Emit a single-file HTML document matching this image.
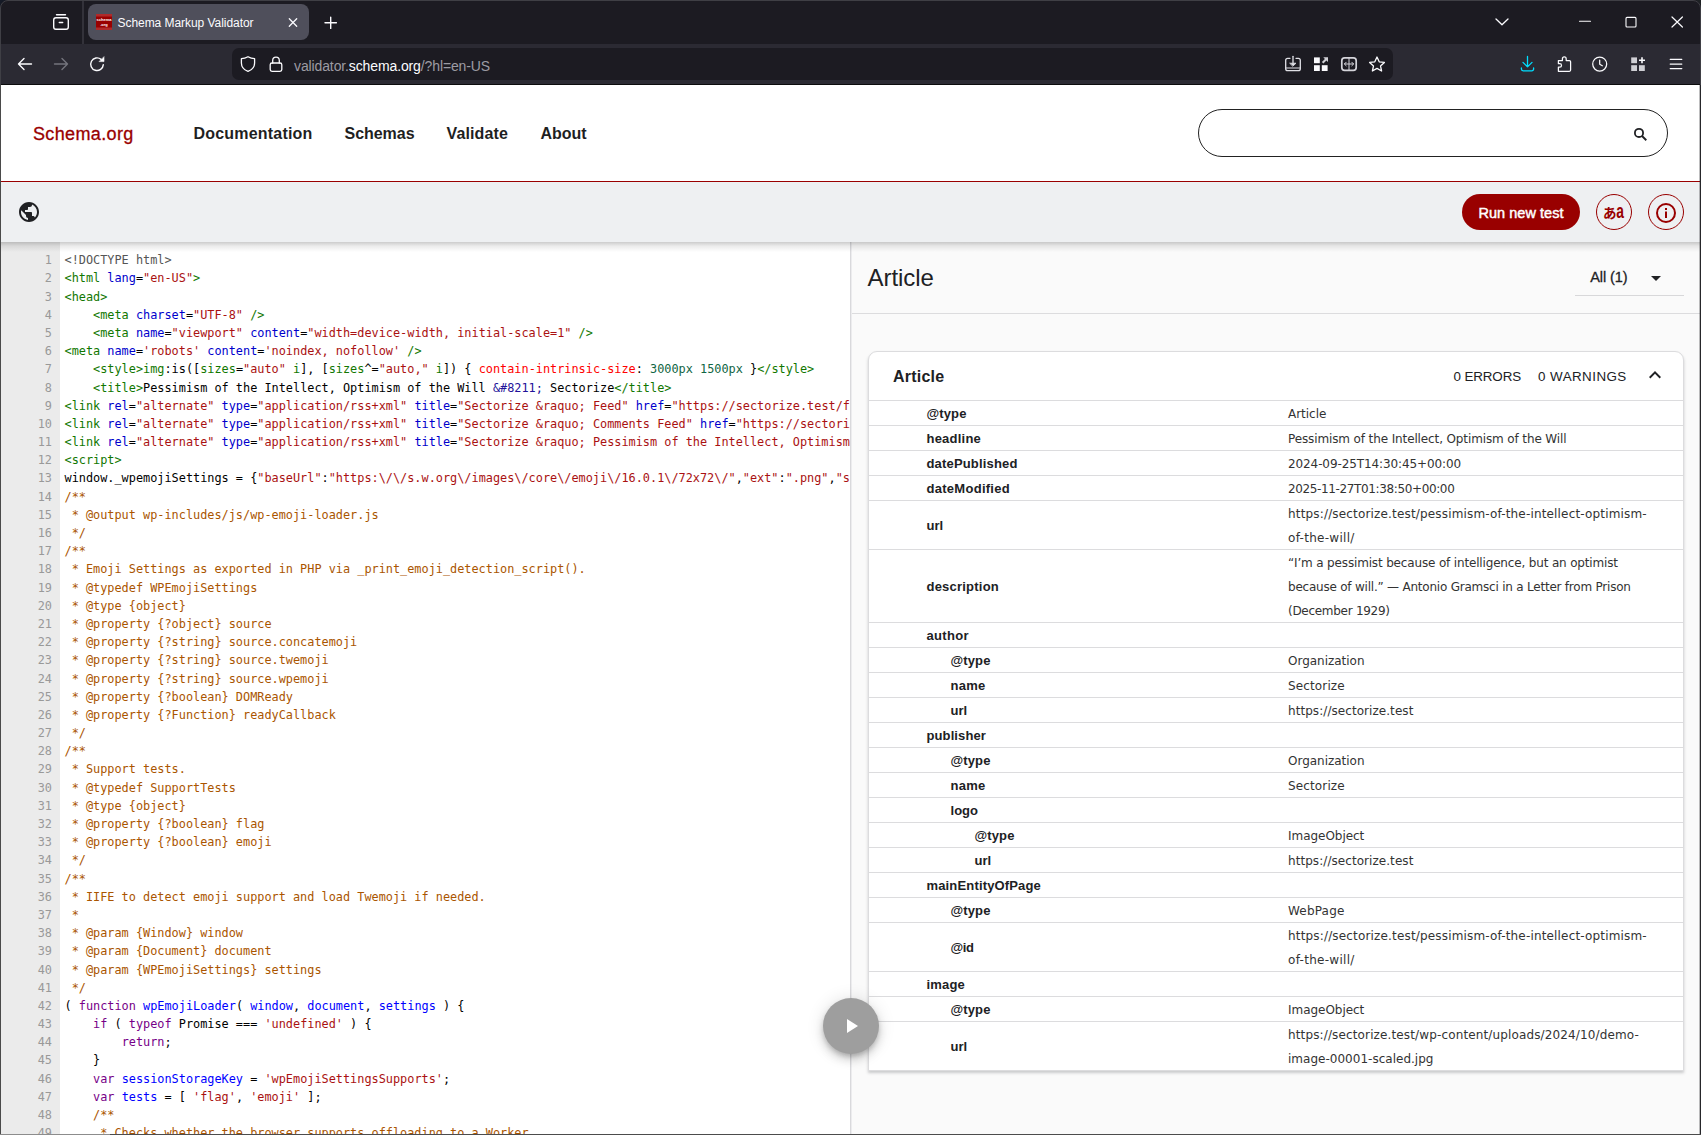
<!DOCTYPE html>
<html lang="en"><head><meta charset="utf-8"><title>Schema Markup Validator</title>
<style>
*{box-sizing:border-box;margin:0;padding:0}
html,body{width:1701px;height:1135px;overflow:hidden;background:#fff;font-family:"Liberation Sans",sans-serif;}
#win{position:absolute;left:0;top:0;width:1701px;height:1135px;overflow:hidden;background:#fff}
.abs{position:absolute}
/* browser chrome */
#tabbar{position:absolute;left:0;top:0;width:1701px;height:44px;background:#1c1b22}
#navbar{position:absolute;left:0;top:44px;width:1701px;height:41px;background:#2b2a33;border-bottom:1px solid #0c0c0d}
#tab{position:absolute;left:88px;top:4px;width:221px;height:36px;border-radius:8px;background:#4f4f5b}
#tabtitle{position:absolute;left:117.5px;top:15px;letter-spacing:-0.05px;font-size:12px;color:#fbfbfe;white-space:nowrap;line-height:16px}
#urlbar{position:absolute;left:232px;top:48px;width:1161px;height:32px;border-radius:7px;background:#1c1b22}
#url{position:absolute;left:294px;top:56.5px;letter-spacing:-0.12px;font-size:14px;color:#9c9ca3;white-space:nowrap;line-height:18px}
#url b{font-weight:normal;color:#fbfbfe}
/* site header */
#hdr{position:absolute;left:0;top:85px;width:1701px;height:97px;background:#fff;border-bottom:1.2px solid #990000}
#logo{position:absolute;left:33px;top:124px;font-size:18px;letter-spacing:.36px;color:#990000;line-height:20px;white-space:nowrap;-webkit-text-stroke:0.3px #990000}
.nav{position:absolute;top:124px;font-size:16px;font-weight:bold;color:#1f1f1f;line-height:20px;white-space:nowrap}
#search{position:absolute;left:1198px;top:108.6px;width:470px;height:48.6px;border:1.2px solid #222;border-radius:24.3px;background:#fff}
/* toolbar */
#tb{position:absolute;left:0;top:182px;width:1701px;height:60px;background:#eef0f2}
#tbshadow{position:absolute;left:0;top:242px;width:1701px;height:10px;background:linear-gradient(rgba(0,0,0,.2),rgba(0,0,0,.08) 40%,rgba(0,0,0,0))}
#run{position:absolute;left:1462px;top:194px;width:118px;height:36px;border-radius:18px;background:#990000;color:#fff;font-size:14.5px;letter-spacing:.03px;-webkit-text-stroke:.45px #fff;text-align:center;line-height:38px;white-space:nowrap}
.circ{position:absolute;top:194px;width:36px;height:36px;border-radius:18px;border:1px solid #990000;background:#eef0f2}
/* code */
#code{position:absolute;left:0;top:242px;width:851px;height:893px;background:#fff;overflow:hidden}
#gutter{position:absolute;left:0;top:0;width:60px;height:893px;background:#ebebeb}
#lines{position:absolute;left:0;top:9.2px;width:2000px;font-family:"DejaVu Sans Mono","Liberation Mono",monospace;font-size:11.87px;line-height:18.19px;color:#000}
#lines div{height:18.19px;position:relative;padding-left:64.5px;white-space:pre}
#lines i{position:absolute;left:0;width:52px;text-align:right;color:#999;font-style:normal}
.t{color:#117700}.a{color:#0000cc}.s{color:#aa1111}.c{color:#aa5500}.k{color:#770088}.d{color:#0000ff}.m{color:#555}.e{color:#ff0000}.n{color:#116644}.at{color:#221199}.v2{color:#0055aa}
/* right */
#right{position:absolute;left:852px;top:242px;width:849px;height:893px;background:#fafafa}
#divider{position:absolute;left:850px;top:242px;width:2px;height:893px;background:linear-gradient(90deg,#d9d9dc 50%,#ececee 50%)}
#rtitle{position:absolute;left:15.5px;top:21.5px;letter-spacing:-.05px;font-size:24px;line-height:28px;color:#202124;white-space:nowrap}
#rsel{position:absolute;left:738.3px;top:26px;font-size:14.5px;letter-spacing:-.1px;line-height:18px;color:#202124;white-space:nowrap;-webkit-text-stroke:.3px #202124}
#rselarrow{position:absolute;left:799px;top:34px;width:0;height:0;border-left:5px solid transparent;border-right:5px solid transparent;border-top:5px solid #202124}
#rselline{position:absolute;left:722.5px;top:53px;width:109px;height:1px;background:#d8d8da}
#rhr{position:absolute;left:0;top:71px;width:849px;height:1px;background:#dcdcde}
#card{position:absolute;left:16px;top:109px;width:816px;height:720px;background:#fff;border:1px solid #dcdcde;border-radius:9px 9px 0 0;box-shadow:0 2px 3px rgba(60,64,67,.25)}
#ctitle{position:absolute;left:24px;top:14.5px;letter-spacing:.23px;font-size:16px;font-weight:bold;line-height:20px;color:#202124;white-space:nowrap}
#cerr,#cwarn{position:absolute;top:15.5px;font-size:13.4px;line-height:18px;color:#202124;white-space:nowrap}
#cerr{left:584.5px;letter-spacing:-.12px}#cwarn{left:669px;letter-spacing:.44px}
#chev{position:absolute;left:774px;top:11px}
.row{position:absolute;left:0;width:814px;border-top:1px solid #dcdcde}
.row .k{position:absolute;top:1px;font-size:13px;font-weight:bold;color:#202124;white-space:nowrap}
.row .v{position:absolute;left:419px;font-family:"DejaVu Sans","Liberation Sans",sans-serif;font-size:12px;line-height:24px;color:#333;white-space:nowrap}
</style></head><body><div id="win">
<div id="tabbar"></div><div id="navbar"></div>
<div id="tab"></div><div id="tabtitle">Schema Markup Validator</div>
<div id="urlbar"></div><div id="url">validator.<b>schema.org</b>/?hl=en-US</div>
<svg id="chrome" class="abs" style="left:0;top:0" width="1701" height="85" viewBox="0 0 1701 85" fill="none" stroke="#fbfbfe" stroke-width="1.4" stroke-linecap="round" stroke-linejoin="round">
<rect x="82.5" y="1" width="1" height="43" fill="#4b4a53" stroke="none"/>
<!-- firefox view -->
<path d="M56.5 14.8h9" /><rect x="53.7" y="17.7" width="14.6" height="11.6" rx="2.2"/><path d="M59.3 22.5h3.4"/>
<!-- favicon -->
<rect x="96" y="14" width="16" height="16" fill="#990000" stroke="none"/>
<rect x="96" y="14" width="16" height="2.5" fill="#b02a2a" stroke="none"/><rect x="96" y="27.5" width="16" height="2.5" fill="#b02a2a" stroke="none"/>
<text x="104" y="21.4" font-family="Liberation Sans,sans-serif" font-size="4" font-weight="bold" fill="#fff" stroke="none" text-anchor="middle">schema</text>
<text x="104" y="25.6" font-family="Liberation Sans,sans-serif" font-size="4" font-weight="bold" fill="#fff" stroke="none" text-anchor="middle">.org</text>
<!-- tab close -->
<path d="M289.3 18.8l7.4 7.4M296.7 18.8l-7.4 7.4" stroke-width="1.3"/>
<!-- new tab -->
<path d="M325 22.7h11.4M330.7 17.2v11.2" stroke-width="1.4"/>
<!-- list all tabs chevron -->
<path d="M1496 19l6 5.8 6-5.8" stroke-width="1.3"/>
<!-- window controls -->
<path d="M1579.5 21.3h11" stroke-width="1.1"/>
<rect x="1626" y="17.4" width="10" height="9.6" rx="1" stroke-width="1.1"/>
<path d="M1672 17l10.4 10M1682.4 17l-10.4 10" stroke-width="1.2"/>
<!-- back -->
<path d="M31.5 64h-13M24 58.5l-5.5 5.5 5.5 5.5"/>
<!-- forward -->
<path d="M54.5 64h13M62 58.5l5.500 5.5-5.500 5.500" stroke="#74747d"/>
<!-- reload -->
<path d="M103.300 64.600a6.300 6.300 0 1 1-2.200-5.200"/><path d="M104 57v4.600h-4.600z" fill="#fbfbfe" stroke-width="0.6"/>
<!-- shield -->
<path d="M248 56.700c2.400 1.400 4.400 1.900 6.600 2v4.300c0 4-2.700 6.900-6.600 8.400-3.900-1.500-6.600-4.400-6.600-8.400v-4.300c2.200-.1 4.200-.6 6.600-2z" stroke-width="1.3"/>
<!-- lock -->
<rect x="270.200" y="63" width="11.600" height="8.400" rx="1.800" stroke-width="1.300"/><path d="M272.700 63v-2.600a3.300 3.300 0 0 1 6.600 0v2.600" stroke-width="1.300"/>
<!-- install -->
<g stroke="#e0e0e6" stroke-width="1.3"><path d="M1290 58.300h-2.300a2 2 0 0 0-2 2v8.400a2 2 0 0 0 2 2h10.600a2 2 0 0 0 2-2v-8.400a2 2 0 0 0-2-2h-2.300"/><path d="M1285.700 68h14.600" stroke-width="1"/><path d="M1293 56.300v7"/><path d="M1290 63.200h6l-3 2.800z" fill="#e0e0e6" stroke-width="0.800"/></g>
<!-- grid arrow -->
<g fill="#fbfbfe" stroke="none"><rect x="1314" y="57.400" width="5.800" height="5.800"/><rect x="1314" y="65.200" width="5.800" height="5.800"/><rect x="1321.800" y="65.200" width="5.800" height="5.800"/><path d="M1323.300 57.300h4.700v4.700l-1.600-1.600-3 3-1.500-1.500 3-3z" fill="#d0d0d6"/></g>
<!-- split -->
<g stroke="#d4d4da" stroke-width="1.300"><rect x="1341.800" y="57.900" width="14.400" height="12.400" rx="2.800" stroke-width="1.700"/><path d="M1349 58v12.400" stroke-width="1"/><path d="M1344.500 64h9M1346.200 62.200l-1.800 1.800 1.800 1.800M1351.800 62.200l1.800 1.800-1.800 1.800" stroke-width="1"/></g>
<!-- star -->
<path d="M1377 57l2.200 4.800 5.200.6-3.900 3.500 1.100 5.100-4.600-2.600-4.600 2.600 1.100-5.100-3.900-3.500 5.200-.6z" stroke-width="1.300"/>
<!-- downloads -->
<g stroke="#00ddff" stroke-width="1.300"><path d="M1527.500 56.400v10.400M1523 62.400l4.500 4.500 4.500-4.500M1521.400 68v1a1.800 1.800 0 0 0 1.800 1.800h8.600a1.800 1.800 0 0 0 1.800-1.800v-1"/></g>
<!-- puzzle -->
<path d="M1558.400 71.300v-4.200h1.400a1.700 1.700 0 0 0 0-3.400h-1.400v-3.100h4v-1.700a1.900 1.900 0 0 1 3.800 0v1.700h3.200a1.200 1.200 0 0 1 1.200 1.200v8.300a1.200 1.200 0 0 1-1.200 1.200z" stroke-width="1.250"/>
<!-- clock -->
<circle cx="1599.700" cy="64.100" r="7" stroke-width="1.250"/><path d="M1599.700 60v4.300l2.600 1.500" stroke-width="1.250"/>
<!-- grid plus -->
<g fill="#cfcfd4" stroke="none"><rect x="1631.200" y="57.400" width="5.800" height="5.800"/><rect x="1631.200" y="65.200" width="5.800" height="5.800"/><rect x="1639" y="65.200" width="5.800" height="5.800"/><path d="M1641.200 57.200h1.600v2.200h2.200v1.600h-2.200v2.200h-1.600v-2.200h-2.200v-1.600h2.200z" fill="#fbfbfe"/></g>
<!-- hamburger -->
<path d="M1670.200 59.300h11.600M1670.200 64h11.600M1670.200 68.600h11.600" stroke-width="1.250"/>
</svg>
<div id="hdr"></div>
<div id="logo">Schema.org</div>
<div class="nav" style="left:193.5px;letter-spacing:.2px">Documentation</div>
<div class="nav" style="left:344.5px;letter-spacing:-.04px">Schemas</div>
<div class="nav" style="left:446.5px;letter-spacing:.12px">Validate</div>
<div class="nav" style="left:540.5px;letter-spacing:-.04px">About</div>
<div id="search"></div>
<div id="tb"></div>
<div id="run">Run new test</div>
<div class="circ" style="left:1596px"></div>
<div class="circ" style="left:1648px"></div>
<svg class="abs" style="left:1627px;top:121px" width="24" height="24" viewBox="0 0 24 24"><circle cx="12" cy="11.900" r="4.100" fill="none" stroke="#202124" stroke-width="1.800"/><path d="M15 15l4.300 4.200" stroke="#202124" stroke-width="1.900" fill="none"/></svg>
<svg class="abs" style="left:17px;top:200px" width="24" height="24" viewBox="0 0 24 24"><path fill="#202124" d="M12 2C6.480 2 2 6.480 2 12s4.480 10 10 10 10-4.480 10-10S17.520 2 12 2zm-1 17.930c-3.950-.490-7-3.850-7-7.930 0-.620.080-1.210.210-1.790L9 15v1c0 1.100.900 2 2 2v1.930zm6.900-2.540c-.260-.810-1-1.390-1.900-1.390h-1v-3c0-.550-.450-1-1-1H8v-2h2c.550 0 1-.450 1-1V7h2c1.100 0 2-.900 2-2v-.410c2.930 1.190 5 4.060 5 7.410 0 2.080-.800 3.970-2.100 5.390z"/></svg>
<svg class="abs" style="left:1596px;top:194px" width="36" height="36" viewBox="0 0 36 36"><text x="7" y="24.300" font-family="Liberation Sans,Noto Sans CJK JP,sans-serif" font-size="13.500" font-weight="bold" fill="#990000">あ</text><text transform="translate(20.300 24.100) scale(.66 1)" font-family="Liberation Sans,sans-serif" font-size="21" font-weight="bold" fill="#990000">a</text></svg>
<svg class="abs" style="left:1654px;top:201px" width="24" height="24" viewBox="0 0 24 24"><circle cx="12" cy="12" r="9" fill="none" stroke="#990000" stroke-width="2"/><path d="M11 10.600h2V17h-2zM11 7h2v2h-2z" fill="#990000"/></svg>
<div id="code"><div id="gutter"></div><div id="lines"><div><i>1</i><span class="m">&lt;!DOCTYPE html&gt;</span></div>
<div><i>2</i><span class="t">&lt;html</span> <span class="a">lang</span>=<span class="s">"en-US"</span><span class="t">&gt;</span></div>
<div><i>3</i><span class="t">&lt;head</span><span class="t">&gt;</span></div>
<div><i>4</i>    <span class="t">&lt;meta</span> <span class="a">charset</span>=<span class="s">"UTF-8"</span> <span class="t">/&gt;</span></div>
<div><i>5</i>    <span class="t">&lt;meta</span> <span class="a">name</span>=<span class="s">"viewport"</span> <span class="a">content</span>=<span class="s">"width=device-width, initial-scale=1"</span> <span class="t">/&gt;</span></div>
<div><i>6</i><span class="t">&lt;meta</span> <span class="a">name</span>=<span class="s">'robots'</span> <span class="a">content</span>=<span class="s">'noindex, nofollow'</span> <span class="t">/&gt;</span></div>
<div><i>7</i>    <span class="t">&lt;style&gt;</span><span class="t">img</span>:is([<span class="t">sizes</span>=<span class="s">"auto"</span> <span class="t">i</span>], [<span class="t">sizes</span>^=<span class="s">"auto,"</span> <span class="t">i</span>]) { <span class="e">contain-intrinsic-size</span>: <span class="n">3000px</span> <span class="n">1500px</span> }<span class="t">&lt;/style&gt;</span></div>
<div><i>8</i>    <span class="t">&lt;title&gt;</span>Pessimism of the Intellect, Optimism of the Will <span class="at">&amp;#8211;</span> Sectorize<span class="t">&lt;/title&gt;</span></div>
<div><i>9</i><span class="t">&lt;link</span> <span class="a">rel</span>=<span class="s">"alternate"</span> <span class="a">type</span>=<span class="s">"application/rss+xml"</span> <span class="a">title</span>=<span class="s">"Sectorize &amp;raquo; Feed"</span> <span class="a">href</span>=<span class="s">"https://sectorize.test/feed/"</span> <span class="t">/&gt;</span></div>
<div><i>10</i><span class="t">&lt;link</span> <span class="a">rel</span>=<span class="s">"alternate"</span> <span class="a">type</span>=<span class="s">"application/rss+xml"</span> <span class="a">title</span>=<span class="s">"Sectorize &amp;raquo; Comments Feed"</span> <span class="a">href</span>=<span class="s">"https://sectorize.test/comments/feed/"</span> <span class="t">/&gt;</span></div>
<div><i>11</i><span class="t">&lt;link</span> <span class="a">rel</span>=<span class="s">"alternate"</span> <span class="a">type</span>=<span class="s">"application/rss+xml"</span> <span class="a">title</span>=<span class="s">"Sectorize &amp;raquo; Pessimism of the Intellect, Optimism of the Will Comments Feed"</span> <span class="a">href</span>=<span class="s">"https://sectorize.test/"</span> <span class="t">/&gt;</span></div>
<div><i>12</i><span class="t">&lt;script</span><span class="t">&gt;</span></div>
<div><i>13</i>window._wpemojiSettings = {<span class="s">"baseUrl"</span>:<span class="s">"https:\/\/s.w.org\/images\/core\/emoji\/16.0.1\/72x72\/"</span>,<span class="s">"ext"</span>:<span class="s">".png"</span>,<span class="s">"svgUrl"</span>:<span class="s">"https:\/\/s.w.org\/images\/core\/emoji\/16.0.1\/svg\/"</span>,<span class="s">"svgExt"</span></div>
<div><i>14</i><span class="c">/**</span></div>
<div><i>15</i><span class="c"> * @output wp-includes/js/wp-emoji-loader.js</span></div>
<div><i>16</i><span class="c"> */</span></div>
<div><i>17</i><span class="c">/**</span></div>
<div><i>18</i><span class="c"> * Emoji Settings as exported in PHP via _print_emoji_detection_script().</span></div>
<div><i>19</i><span class="c"> * @typedef WPEmojiSettings</span></div>
<div><i>20</i><span class="c"> * @type {object}</span></div>
<div><i>21</i><span class="c"> * @property {?object} source</span></div>
<div><i>22</i><span class="c"> * @property {?string} source.concatemoji</span></div>
<div><i>23</i><span class="c"> * @property {?string} source.twemoji</span></div>
<div><i>24</i><span class="c"> * @property {?string} source.wpemoji</span></div>
<div><i>25</i><span class="c"> * @property {?boolean} DOMReady</span></div>
<div><i>26</i><span class="c"> * @property {?Function} readyCallback</span></div>
<div><i>27</i><span class="c"> */</span></div>
<div><i>28</i><span class="c">/**</span></div>
<div><i>29</i><span class="c"> * Support tests.</span></div>
<div><i>30</i><span class="c"> * @typedef SupportTests</span></div>
<div><i>31</i><span class="c"> * @type {object}</span></div>
<div><i>32</i><span class="c"> * @property {?boolean} flag</span></div>
<div><i>33</i><span class="c"> * @property {?boolean} emoji</span></div>
<div><i>34</i><span class="c"> */</span></div>
<div><i>35</i><span class="c">/**</span></div>
<div><i>36</i><span class="c"> * IIFE to detect emoji support and load Twemoji if needed.</span></div>
<div><i>37</i><span class="c"> *</span></div>
<div><i>38</i><span class="c"> * @param {Window} window</span></div>
<div><i>39</i><span class="c"> * @param {Document} document</span></div>
<div><i>40</i><span class="c"> * @param {WPEmojiSettings} settings</span></div>
<div><i>41</i><span class="c"> */</span></div>
<div><i>42</i>( <span class="k">function</span> <span class="d">wpEmojiLoader</span>( <span class="d">window</span>, <span class="d">document</span>, <span class="d">settings</span> ) {</div>
<div><i>43</i>    <span class="k">if</span> ( <span class="k">typeof</span> Promise === <span class="s">'undefined'</span> ) {</div>
<div><i>44</i>        <span class="k">return</span>;</div>
<div><i>45</i>    }</div>
<div><i>46</i>    <span class="k">var</span> <span class="d">sessionStorageKey</span> = <span class="s">'wpEmojiSettingsSupports'</span>;</div>
<div><i>47</i>    <span class="k">var</span> <span class="d">tests</span> = [ <span class="s">'flag'</span>, <span class="s">'emoji'</span> ];</div>
<div><i>48</i>    <span class="c">/**</span></div>
<div><i>49</i>    <span class="c"> * Checks whether the browser supports offloading to a Worker.</span></div>
<div><i>50</i>    <span class="c"> *</span></div></div></div>
<div id="divider"></div>
<div id="right"><!--R0-->
<div id="rtitle">Article</div>
<div id="rsel">All (1)</div><div id="rselarrow"></div><div id="rselline"></div>
<div id="rhr"></div>
<div id="card">
<div id="ctitle">Article</div><div id="cerr">0 ERRORS</div><div id="cwarn">0 WARNINGS</div>
<svg id="chev" width="24" height="24" viewBox="0 0 24 24"><path d="M12 8l-6 6 1.410 1.410L12 10.830l4.590 4.580L18 14z" fill="#202124"/></svg>
<div class="row" style="top:48px;height:25px"><div class="k" style="left:57.5px;line-height:24px;letter-spacing:0.119px">@type</div><div class="v" style="top:1px;letter-spacing:-0.029px">Article</div></div>
<div class="row" style="top:73px;height:25px"><div class="k" style="left:57.5px;line-height:24px;letter-spacing:0.219px">headline</div><div class="v" style="top:1px;letter-spacing:-0.121px">Pessimism of the Intellect, Optimism of the Will</div></div>
<div class="row" style="top:98px;height:25px"><div class="k" style="left:57.5px;line-height:24px;letter-spacing:0.165px">datePublished</div><div class="v" style="top:1px;letter-spacing:-0.1px">2024-09-25T14:30:45+00:00</div></div>
<div class="row" style="top:123px;height:25px"><div class="k" style="left:57.5px;line-height:24px;letter-spacing:0.277px">dateModified</div><div class="v" style="top:1px;letter-spacing:-0.368px">2025-11-27T01:38:50+00:00</div></div>
<div class="row" style="top:148px;height:49px"><div class="k" style="left:57.5px;line-height:48px;letter-spacing:-0.042px">url</div><div class="v" style="top:1px;letter-spacing:0.166px">https://sectorize.test/pessimism-of-the-intellect-optimism-</div><div class="v" style="top:25px;letter-spacing:0.298px">of-the-will/</div></div>
<div class="row" style="top:197px;height:73px"><div class="k" style="left:57.5px;line-height:72px;letter-spacing:0.22px">description</div><div class="v" style="top:1px;letter-spacing:-0.16px">“I’m a pessimist because of intelligence, but an optimist</div><div class="v" style="top:25px;letter-spacing:-0.22px">because of will.” — Antonio Gramsci in a Letter from Prison</div><div class="v" style="top:49px;letter-spacing:-0.284px">(December 1929)</div></div>
<div class="row" style="top:270px;height:25px"><div class="k" style="left:57.5px;line-height:24px;letter-spacing:0.341px">author</div></div>
<div class="row" style="top:295px;height:25px"><div class="k" style="left:81.5px;line-height:24px;letter-spacing:0.119px">@type</div><div class="v" style="top:1px;letter-spacing:-0.018px">Organization</div></div>
<div class="row" style="top:320px;height:25px"><div class="k" style="left:81.5px;line-height:24px;letter-spacing:0.258px">name</div><div class="v" style="top:1px;letter-spacing:0.134px">Sectorize</div></div>
<div class="row" style="top:345px;height:25px"><div class="k" style="left:81.5px;line-height:24px;letter-spacing:-0.042px">url</div><div class="v" style="top:1px;letter-spacing:0.059px">https://sectorize.test</div></div>
<div class="row" style="top:370px;height:25px"><div class="k" style="left:57.5px;line-height:24px;letter-spacing:0.109px">publisher</div></div>
<div class="row" style="top:395px;height:25px"><div class="k" style="left:81.5px;line-height:24px;letter-spacing:0.119px">@type</div><div class="v" style="top:1px;letter-spacing:-0.018px">Organization</div></div>
<div class="row" style="top:420px;height:25px"><div class="k" style="left:81.5px;line-height:24px;letter-spacing:0.258px">name</div><div class="v" style="top:1px;letter-spacing:0.134px">Sectorize</div></div>
<div class="row" style="top:445px;height:25px"><div class="k" style="left:81.5px;line-height:24px;letter-spacing:0.016px">logo</div></div>
<div class="row" style="top:470px;height:25px"><div class="k" style="left:105.5px;line-height:24px;letter-spacing:0.119px">@type</div><div class="v" style="top:1px;letter-spacing:-0.034px">ImageObject</div></div>
<div class="row" style="top:495px;height:25px"><div class="k" style="left:105.5px;line-height:24px;letter-spacing:-0.042px">url</div><div class="v" style="top:1px;letter-spacing:0.059px">https://sectorize.test</div></div>
<div class="row" style="top:520px;height:25px"><div class="k" style="left:57.5px;line-height:24px;letter-spacing:0.158px">mainEntityOfPage</div></div>
<div class="row" style="top:545px;height:25px"><div class="k" style="left:81.5px;line-height:24px;letter-spacing:0.119px">@type</div><div class="v" style="top:1px;letter-spacing:0.183px">WebPage</div></div>
<div class="row" style="top:570px;height:49px"><div class="k" style="left:81.5px;line-height:48px;letter-spacing:-0.411px">@id</div><div class="v" style="top:1px;letter-spacing:0.166px">https://sectorize.test/pessimism-of-the-intellect-optimism-</div><div class="v" style="top:25px;letter-spacing:0.298px">of-the-will/</div></div>
<div class="row" style="top:619px;height:25px"><div class="k" style="left:57.5px;line-height:24px;letter-spacing:0.184px">image</div></div>
<div class="row" style="top:644px;height:25px"><div class="k" style="left:81.5px;line-height:24px;letter-spacing:0.119px">@type</div><div class="v" style="top:1px;letter-spacing:-0.034px">ImageObject</div></div>
<div class="row" style="top:669px;height:49px"><div class="k" style="left:81.5px;line-height:48px;letter-spacing:-0.042px">url</div><div class="v" style="top:1px;letter-spacing:0.136px">https://sectorize.test/wp-content/uploads/2024/10/demo-</div><div class="v" style="top:25px;letter-spacing:0.016px">image-00001-scaled.jpg</div></div>
</div>
<!--R1--></div>
<div id="tbshadow"></div>
<div class="abs" style="left:823px;top:998px;width:56px;height:56px;border-radius:28px;background:#9e9e9e;box-shadow:0 3px 5px -1px rgba(0,0,0,.2),0 6px 10px rgba(0,0,0,.14),0 1px 18px rgba(0,0,0,.12)"><svg class="abs" style="left:16px;top:16px" width="24" height="24" viewBox="0 0 24 24"><path d="M8 5v14l11-7z" fill="#fff"/></svg></div>

<svg class="abs" style="left:0;top:0;pointer-events:none" width="1701" height="1135" viewBox="0 0 1701 1135" fill="none">
<path d="M0 0h8a8 8 0 0 0-8 8z" fill="#151a26"/><path d="M1701 0h-8a8 8 0 0 1 8 8z" fill="#1e2124"/>
<path d="M.500 1135V8a7.500 7.500 0 0 1 7.500-7.500h1685a7.500 7.500 0 0 1 7.500 7.500v1127" stroke="#3f3f45" stroke-width="1"/>
<rect x="0" y="85" width="1" height="1050" fill="#4a4a4a"/><rect x="1699.700" y="85" width="1.300" height="1050" fill="#26262a"/>
<rect x="0" y="1134" width="110" height="1" fill="#8c8c8c"/><rect x="110" y="1134" width="1591" height="1" fill="#4c4c4c"/>
</svg>

</div></body></html>
